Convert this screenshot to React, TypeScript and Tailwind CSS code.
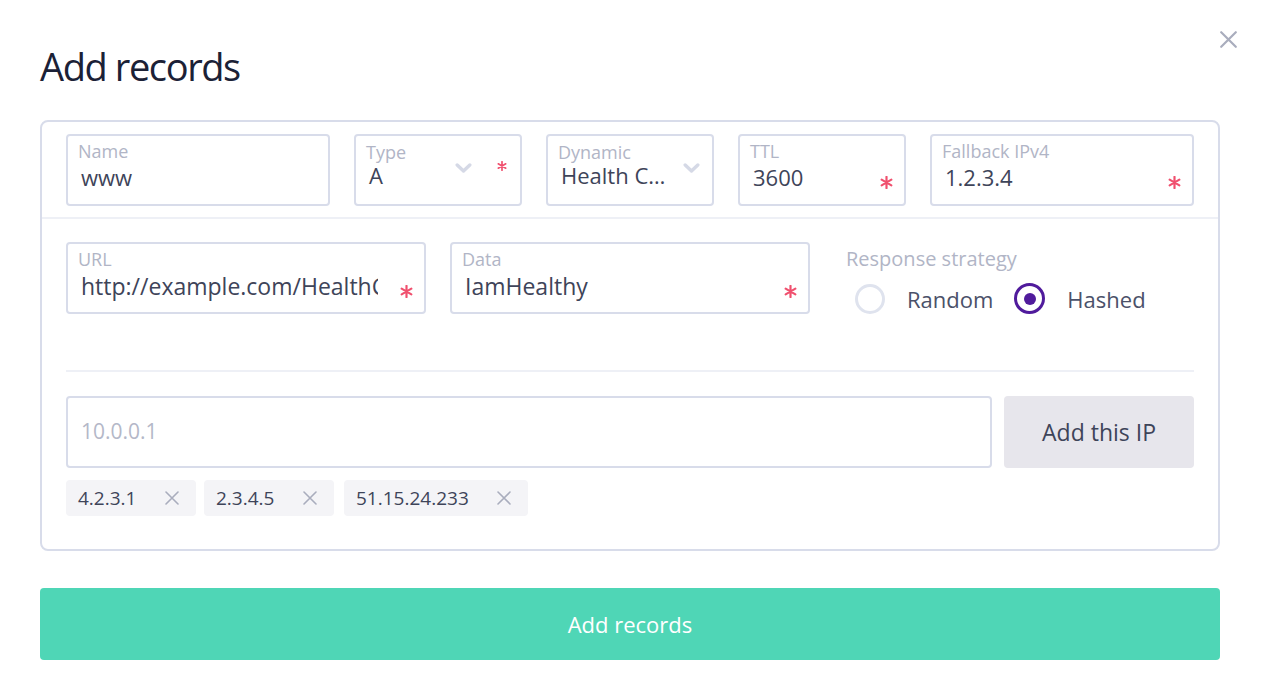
import React from "react";

const Asterisk = ({ size = 13, className = "" }: { size?: number; className?: string }) => (
  <svg width={size} height={size} viewBox="0 0 12 12" className={`shrink-0 ${className}`} fill="none">
    <path d="M6 0.8v10.4M1.5 3.4l9 5.2M1.5 8.6l9-5.2" stroke="#f0506e" strokeWidth="2" strokeLinecap="round" />
  </svg>
);

const Chevron = () => (
  <svg width="17" height="10" viewBox="0 0 17 10" fill="none" className="shrink-0">
    <path d="M2.2 2l6.3 6 6.3-6" stroke="#d5d9e6" strokeWidth="3.4" strokeLinecap="round" strokeLinejoin="round" />
  </svg>
);

const XIcon = ({ size = 14, color = "#a9adbd", w = 1.6 }: { size?: number; color?: string; w?: number }) => (
  <svg width={size} height={size} viewBox="0 0 14 14" fill="none" className="shrink-0">
    <path d="M1 1l12 12M13 1L1 13" stroke={color} strokeWidth={w} strokeLinecap="round" />
  </svg>
);

function Field({
  label,
  value,
  width,
  req = true,
  low = false,
}: {
  label: string;
  value: string;
  width: string;
  req?: boolean;
  low?: boolean;
}) {
  return (
    <div className={`${width} h-[72px] border-2 border-[#d8dcea] rounded-[4px] flex pl-[10px] pr-[11px] pt-[4px] shrink-0`}>
      <div className="flex-1 min-w-0 flex flex-col">
        <div className="text-[18px] leading-[22px] text-[#b1b5c6]">{label}</div>
        <div
          className={`${low ? "text-[23px] leading-[33px]" : "text-[22px] leading-[31px]"} text-[#3e4459] pl-[3px] whitespace-nowrap overflow-hidden`}
        >
          {value}
        </div>
      </div>
      {req && <Asterisk className={`${low ? "mt-[37px]" : "mt-[36px]"} ml-[22px]`} />}
    </div>
  );
}

function SelectField({
  label,
  value,
  width,
  req,
}: {
  label: string;
  value: string;
  width: string;
  req?: boolean;
}) {
  return (
    <div
      className={`${width} h-[72px] border-2 border-[#d8dcea] rounded-[4px] flex pl-[10px] ${req ? "pr-[13px]" : "pr-[12px]"} pt-[6px] shrink-0`}
    >
      <div className="flex-1 min-w-0 flex flex-col">
        <div className="text-[18px] leading-[21px] text-[#b1b5c6]">{label}</div>
        <div className="text-[22px] leading-[25px] text-[#3e4459] pl-[3px] whitespace-nowrap overflow-hidden text-ellipsis">
          {value}
        </div>
      </div>
      <div className="mt-[21px] ml-[6px]">
        <Chevron />
      </div>
      {req && <Asterisk size={10} className="mt-[19px] ml-[25px]" />}
    </div>
  );
}

function Tag({ text, width, ml }: { text: string; width: string; ml: string }) {
  return (
    <div className={`${ml} ${width} h-[36px] rounded-[4px] bg-[#f4f4f7] flex items-center justify-between pl-[12px] pr-[17px]`}>
      <span className="text-[19px] leading-[36px] text-[#3e4459]">{text}</span>
      <XIcon size={14} />
    </div>
  );
}

export default function App() {
  return (
    <div
      className="w-[1262px] h-[700px] bg-white relative"
      style={{ fontFamily: "'Open Sans', 'Noto Sans', sans-serif" }}
    >
      <button className="absolute left-[1220px] top-[31px]">
        <XIcon size={17} color="#a9adbd" w={1.8} />
      </button>
      <div className="pl-[40px] pr-[42px] pt-[43px]">
        <h1 className="text-[38px] leading-[46px] tracking-[-1.4px] text-[#1b2136] font-normal">Add records</h1>
        <div className="mt-[31px] border-2 border-[#d8dcea] rounded-[8px]">
          <div className="flex gap-[24px] px-[24px] pt-[12px] pb-[11px] border-b-2 border-[#eef0f6]">
            <Field label="Name" value="www" width="w-[264px]" req={false} />
            <SelectField label="Type" value="A" width="w-[168px]" req />
            <SelectField label="Dynamic" value="Health Check" width="w-[168px]" />
            <Field label="TTL" value="3600" width="w-[168px]" />
            <Field label="Fallback IPv4" value="1.2.3.4" width="w-[264px]" />
          </div>
          <div className="px-[24px] pt-[23px]">
            <div className="flex gap-[24px]">
              <Field label="URL" value="http://example.com/HealthCheck" width="w-[360px]" low />
              <Field label="Data" value="IamHealthy" width="w-[360px]" low />
              <div className="flex-1 pl-[12px] pt-[5px]">
                <div className="text-[20px] leading-[24px] text-[#b1b5c6]">Response strategy</div>
                <div className="flex items-center mt-[12px] ml-[9px]">
                  <span className="w-[30px] h-[30px] rounded-full border-[3px] border-[#dfe3ee]" />
                  <span className="ml-[22px] text-[22px] leading-[30px] text-[#4b5169]">Random</span>
                  <span className="ml-[21px] w-[31px] h-[31px] rounded-full border-[3.5px] border-[#501b9c] flex items-center justify-center">
                    <span className="w-[12px] h-[12px] rounded-full bg-[#501b9c]" />
                  </span>
                  <span className="ml-[22px] text-[22px] leading-[30px] text-[#4b5169]">Hashed</span>
                </div>
              </div>
            </div>
            <div className="mt-[56px] border-t-2 border-[#eef0f6]" />
            <div className="flex gap-[12px] mt-[24px]">
              <div className="flex-1 h-[72px] border-2 border-[#d8dcea] rounded-[4px] flex items-center pl-[13px] text-[21px] text-[#b4b8c8]">
                10.0.0.1
              </div>
              <button className="w-[190px] h-[72px] rounded-[4px] bg-[#e7e6ec] text-[23px] text-[#3e4459]">
                Add this IP
              </button>
            </div>
            <div className="flex mt-[12px] pb-[33px]">
              <Tag text="4.2.3.1" width="w-[130px]" ml="ml-0" />
              <Tag text="2.3.4.5" width="w-[130px]" ml="ml-[8px]" />
              <Tag text="51.15.24.233" width="w-[184px]" ml="ml-[10px]" />
            </div>
          </div>
        </div>
        <button className="mt-[37px] w-full h-[72px] rounded-[4px] bg-[#4fd6b6] text-white text-[22px]">
          Add records
        </button>
      </div>
    </div>
  );
}
